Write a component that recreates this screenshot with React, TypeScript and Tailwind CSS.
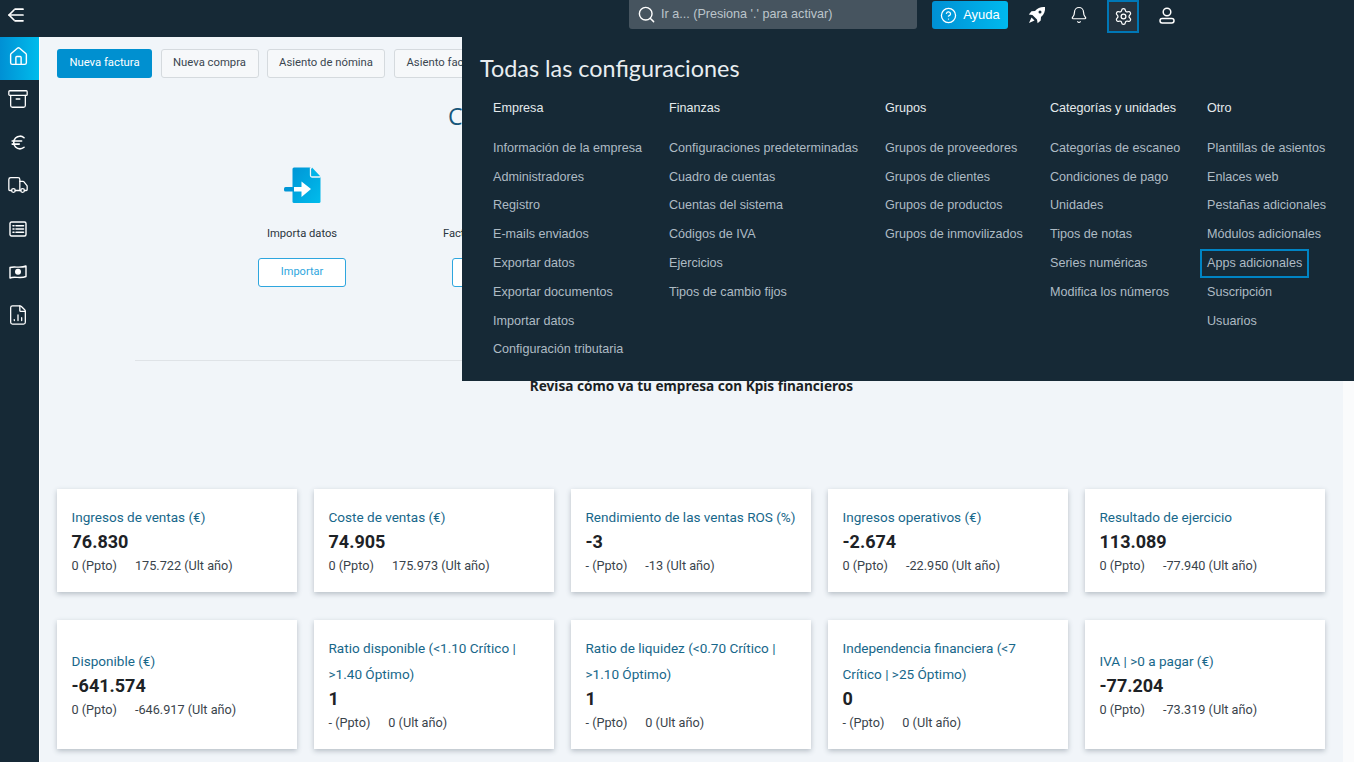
import React from "react";
import { Search, CircleHelp, Bell, Settings, House, Archive, Euro, Truck, FileChartColumn } from "lucide-react";

const BackMenu = () => (
  <svg width="18" height="16" viewBox="0 0 18 16" fill="none" stroke="white" strokeWidth="1.7" strokeLinecap="round" strokeLinejoin="round">
    <path d="M7 3 2 8l5 5" /><path d="M2 8h14" /><path d="M8 2.200h8" /><path d="M8 13.800h8" />
  </svg>
);
const ListBox = () => (
  <svg width="18" height="16" viewBox="0 0 18 16" fill="none" stroke="white" strokeWidth="1.4" strokeLinecap="round">
    <rect x="1" y="1" width="16" height="14" rx="1.500" />
    <path d="M4 4.700h1M4 8h1M4 11.300h1M7 4.700h7.500M7 8h7.500M7 11.300h7.500" strokeWidth="1.600" />
  </svg>
);
const Note = () => (
  <svg width="18" height="16" viewBox="0 0 18 16" fill="none" stroke="white" strokeWidth="1.4" strokeLinejoin="round">
    <path d="M1 3.500c4-1.500 11 1 16-1.500v10.500c-5 2.500-12-.5-16 1.500z" />
    <circle cx="9" cy="7.800" r="2.300" fill="white" />
  </svg>
);
const Rocket = () => (
  <svg width="18" height="18" viewBox="0 0 18 18" fill="white">
    <path d="M17 1c-4-.4-7.400.8-10 4L3.500 5.300.8 8.400l3.600.6 4.600 4.600.6 3.600 3.100-2.700.3-3.500c3.200-2.600 4.400-6 4-10zM12 4.500a1.500 1.500 0 1 1 0 3 1.500 1.500 0 0 1 0-3z" fillRule="evenodd" />
    <path d="M3.500 11.500 1 17l5.500-2.500z" />
  </svg>
);
const UserIcon = () => (
  <svg width="16" height="17" viewBox="0 0 16 17" fill="none" stroke="white" strokeWidth="1.5">
    <circle cx="8" cy="5" r="3.800" />
    <rect x="1" y="11.500" width="14" height="4.500" rx="2.200" />
  </svg>
);
const ImportIcon = () => (
  <svg width="38" height="38" viewBox="0 0 38 38">
    <defs>
      <linearGradient id="imp" x1="0" y1="0" x2="1" y2="1">
        <stop offset="0" stopColor="#0096d6" />
        <stop offset="1" stopColor="#00bcec" />
      </linearGradient>
    </defs>
    <path d="M11 1.500h16.500l10 10v24a1.500 1.500 0 0 1-1.500 1.500H11a1.500 1.500 0 0 1-1.500-1.500V3a1.500 1.500 0 0 1 1.500-1.500z" fill="url(#imp)" />
    <path d="M29 1.500 37.500 10.500H29z" fill="#00b4e8" />
    <path d="M27.500 1.500v8a1.500 1.500 0 0 0 1.500 1.500h8.500" fill="none" stroke="#f2f5f9" strokeWidth="1.300" />
    <rect x="1" y="21" width="10" height="4.500" rx="1.500" fill="#0096d6" />
    <path d="M11 21h7.500v-5.500L28 23l-9.500 8v-5.500H11z" fill="white" />
  </svg>
);

const sideIcons = [
  <Archive size={22} strokeWidth={1.4} color="white" />,
  <Euro size={19} strokeWidth={2} color="white" />,
  <Truck size={22} strokeWidth={1.4} color="white" />,
  <ListBox />,
  <Note />,
  <FileChartColumn size={22} strokeWidth={1.4} color="white" />,
];

const columns = [
  { w: "w-[176px]", title: "Empresa", links: ["Información de la empresa", "Administradores", "Registro", "E-mails enviados", "Exportar datos", "Exportar documentos", "Importar datos", "Configuración tributaria"] },
  { w: "w-[216px]", title: "Finanzas", links: ["Configuraciones predeterminadas", "Cuadro de cuentas", "Cuentas del sistema", "Códigos de IVA", "Ejercicios", "Tipos de cambio fijos"] },
  { w: "w-[165px]", title: "Grupos", links: ["Grupos de proveedores", "Grupos de clientes", "Grupos de productos", "Grupos de inmovilizados"] },
  { w: "w-[157px]", title: "Categorías y unidades", links: ["Categorías de escaneo", "Condiciones de pago", "Unidades", "Tipos de notas", "Series numéricas", "Modifica los números"] },
  { w: "w-[140px]", title: "Otro", links: ["Plantillas de asientos", "Enlaces web", "Pestañas adicionales", "Módulos adicionales", "Apps adicionales", "Suscripción", "Usuarios"] },
];

const cards = [
  { t: ["Ingresos de ventas (€)"], v: "76.830", a: "0 (Ppto)", b: "175.722 (Ult año)" },
  { t: ["Coste de ventas (€)"], v: "74.905", a: "0 (Ppto)", b: "175.973 (Ult año)" },
  { t: ["Rendimiento de las ventas ROS (%)"], v: "-3", a: "- (Ppto)", b: "-13 (Ult año)" },
  { t: ["Ingresos operativos (€)"], v: "-2.674", a: "0 (Ppto)", b: "-22.950 (Ult año)" },
  { t: ["Resultado de ejercicio"], v: "113.089", a: "0 (Ppto)", b: "-77.940 (Ult año)" },
  { t: ["Disponible (€)"], v: "-641.574", a: "0 (Ppto)", b: "-646.917 (Ult año)" },
  { t: ["Ratio disponible (<1.10 Crítico |", ">1.40 Óptimo)"], v: "1", a: "- (Ppto)", b: "0 (Ult año)" },
  { t: ["Ratio de liquidez (<0.70 Crítico |", ">1.10 Óptimo)"], v: "1", a: "- (Ppto)", b: "0 (Ult año)" },
  { t: ["Independencia financiera (<7", "Crítico | >25 Óptimo)"], v: "0", a: "- (Ppto)", b: "0 (Ult año)" },
  { t: ["IVA | >0 a pagar (€)"], v: "-77.204", a: "0 (Ppto)", b: "-73.319 (Ult año)" },
];

const importItems = ["Importa datos", "Factura a tus clientes"];

export default function App() {
  return (
    <div className="relative h-screen w-full overflow-hidden flex flex-col bg-[#f1f5f9] font-['Roboto',sans-serif]">
      <header className="h-[37px] shrink-0 bg-[#162936] flex items-start">
        <div className="w-[39px] h-[30px] flex items-center justify-center -ml-[4px]"><BackMenu /></div>
        <div className="ml-[594px] w-[288px] h-[29px] bg-[#46545f] rounded-b-[3px] flex items-center pl-[8px] gap-[5px] font-['Liberation_Sans',sans-serif] text-[12.600px] text-[#bcc5cb]">
          <Search size={19} color="white" strokeWidth={1.8} />
          <span>Ir a... (Presiona '.' para activar)</span>
        </div>
        <div className="ml-[15px] mt-[1px] w-[76px] h-[28px] rounded-[3px] bg-gradient-to-r from-[#0090d4] to-[#00b9ee] flex items-center justify-center gap-[6px] text-white font-['Liberation_Sans',sans-serif] text-[13px]">
          <CircleHelp size={17} color="white" strokeWidth={1.8} />
          <span>Ayuda</span>
        </div>
        <div className="ml-[20px] h-[32px] w-[18px] flex items-center justify-center -translate-y-[1px]"><Rocket /></div>
        <div className="ml-[24px] h-[32px] w-[18px] flex items-center justify-center -translate-y-[1px]"><Bell size={20} color="white" strokeWidth={1.6} /></div>
        <div className="ml-[19px] w-[32px] h-[33px] bg-[#25323e] border-2 border-[#0077b6] flex items-center justify-center"><Settings size={19} color="white" strokeWidth={1.6} /></div>
        <div className="ml-[20px] h-[32px] w-[16px] flex items-center justify-center -translate-y-[1px]"><UserIcon /></div>
      </header>

      <div className="flex-1 flex min-h-0">
        <aside className="w-[39px] shrink-0 bg-[#162936] flex flex-col">
          <div className="h-[43px] pb-[5px] pr-[3px] bg-gradient-to-r from-[#0090d4] to-[#00bcec] flex items-center justify-center">
            <House size={21} color="white" strokeWidth={1.6} />
          </div>
          {sideIcons.map((icon, i) => (
            <div key={i} className="h-[43.200px] pb-[5px] pr-[3px] flex items-center justify-center">{icon}</div>
          ))}
        </aside>

        <main className="w-[1304px] shrink-0 border-l border-white pl-[17px] pr-[18px] pt-[12px]">
          <div className="flex gap-[8.500px] h-[29px] text-[11.300px]">
            <button className="w-[95px] rounded-[3px] bg-[#0090d0] text-white">Nueva factura</button>
            <button className="w-[98px] rounded-[3px] border border-[#d5dade] bg-[#f6f8fa] text-[#3a4650]">Nueva compra</button>
            <button className="w-[118px] rounded-[3px] border border-[#d5dade] bg-[#f6f8fa] text-[#3a4650]">Asiento de nómina</button>
            <button className="px-[12px] rounded-[3px] border border-[#d5dade] bg-[#f6f8fa] text-[#3a4650] whitespace-nowrap">Asiento factura</button>
          </div>

          <h2 className="mt-[26px] h-[24px] ml-[391px] text-[23px] leading-[24px] text-[#17567a] font-['Open_Sans',sans-serif]">C</h2>

          <div className="mt-[38px] flex pl-[148px]">
            {importItems.map((label) => (
              <div key={label} className="w-[194px] flex flex-col items-center">
                <ImportIcon />
                <div className="mt-[21px] h-[18px] text-[11.200px] leading-[18px] text-[#2b3640] whitespace-nowrap">{label}</div>
                <button className="mt-[15px] w-[88px] h-[29px] rounded-[3px] border border-[#2ea6de] bg-white text-[11px] text-[#2ea6de]">Importar</button>
              </div>
            ))}
          </div>

          <hr className="mt-[73px] mx-[78px] border-0 h-px bg-[#dfe3e7]" />

          <h3 className="mt-[15px] text-center text-[13.600px] leading-[20px] font-bold text-[#1a1f24] font-['Noto_Sans',sans-serif] pl-[1px]">Revisa cómo va tu empresa con Kpis financieros</h3>

          <div className="mt-[93px] grid grid-cols-5 gap-x-[17px] gap-y-[28px]">
            {cards.map((c) => (
              <div key={c.v + c.t[0]} className="bg-white shadow-[0_2px_5px_rgba(60,75,90,0.32)] px-[14.500px] py-[14.500px] flex flex-col justify-center whitespace-nowrap">
                {c.t.map((line) => (
                  <div key={line} className="text-[13.550px] leading-[26px] text-[#17678a]">{line}</div>
                ))}
                <div className="text-[18px] leading-[24px] font-bold text-[#1d2226]">{c.v}</div>
                <div className="text-[12.700px] leading-[24px] text-[#39434b] flex gap-[18px]"><span>{c.a}</span><span>{c.b}</span></div>
              </div>
            ))}
          </div>
        </main>
        <div className="flex-1 bg-[#fafbfc]" />
      </div>

      <section className="absolute left-[462px] right-0 top-[37px] h-[344px] bg-[#162936] pl-[18px] pt-[15px]">
        <h1 className="text-[23.400px] leading-[32px] text-[#e8edf0] font-['Lato',sans-serif]">Todas las configuraciones</h1>
        <div className="flex mt-[14px] pl-[13px] font-['Liberation_Sans',sans-serif] text-[12.600px]">
          {columns.map((col) => (
            <div key={col.title} className={`${col.w} shrink-0`}>
              <div className="h-[20px] leading-[20px] text-[#e4e9ec] whitespace-nowrap">{col.title}</div>
              <ul className="mt-[15.800px]">
                {col.links.map((l) => (
                  <li key={l} className="h-[28.800px] -ml-[7px] whitespace-nowrap">
                    <span className={`inline-flex items-center h-[29px] px-[5px] border-2 text-[#aebbc4] ${l === "Apps adicionales" ? "border-[#0084c4]" : "border-transparent"}`}>{l}</span>
                  </li>
                ))}
              </ul>
            </div>
          ))}
        </div>
      </section>
    </div>
  );
}
